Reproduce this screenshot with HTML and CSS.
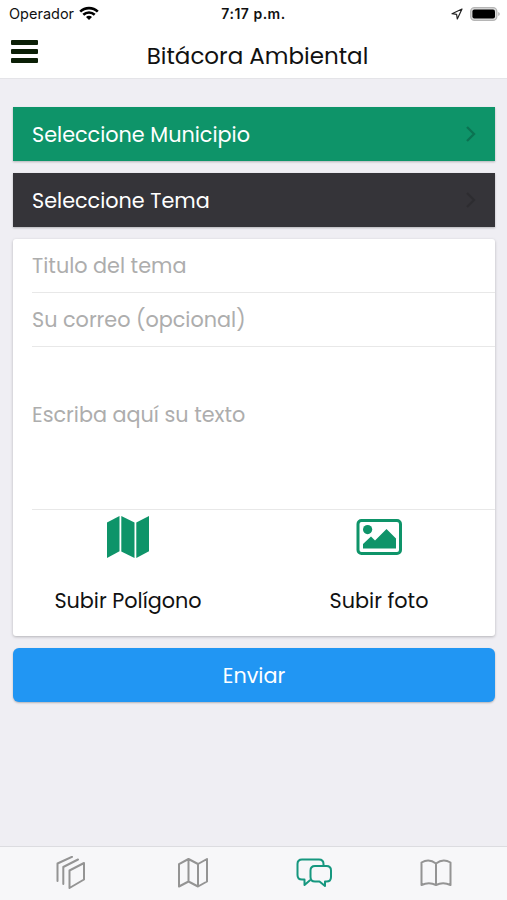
FILE: index.html
```
<!DOCTYPE html>
<html lang="es">
<head>
  <meta charset="UTF-8">
  <title>Bitácora Ambiental</title>
  <meta name="viewport" content="width=device-width, initial-scale=1.0">
  <link rel="stylesheet" href="styles.css">
</head>
<body>
  <div class="status-bar">
    <div class="carrier">
      <span>Operador</span>
      <svg width="20" height="15" viewBox="0 0 20 15" fill="none" stroke="#000" stroke-width="2.6">
        <path d="M1.2 5.6C6 .9 14 .9 18.800 5.600"/>
        <path d="M4.300 8.800c3.200-3 8.200-3 11.400 0"/>
        <path d="M7 10.900c1.700-1.400 4.300-1.400 6 0l-3 3.100z" fill="#000" stroke="none"/>
      </svg>
    </div>
    <span class="clock">7:17 p.m.</span>
    <div class="indicators">
      <svg width="12" height="12" viewBox="0 0 12 12" fill="none" stroke="#222" stroke-width="1.200" stroke-linejoin="round">
        <path d="M11 1 1 5.700l4.600.6.7 4.700z"/>
      </svg>
      <svg width="30" height="14" viewBox="0 0 30 14">
        <rect x=".7" y=".7" width="26.100" height="12.600" rx="3.800" fill="#ddd" stroke="#b5b5b5" stroke-width="1.300"/>
        <rect x="2.400" y="2.400" width="22.600" height="9.200" rx="2" fill="#000"/>
        <path d="M28.200 5v4q1.600-.7 1.600-2t-1.600-2" fill="#b5b5b5"/>
      </svg>
    </div>
  </div>

  <header class="header">
    <button class="menu-toggle" aria-label="Menú"><i></i><i></i><i></i></button>
    <h1 class="title">Bitácora Ambiental</h1>
  </header>

  <main class="content">
    <div class="select municipio">
      <span>Seleccione Municipio</span>
      <svg class="arrow" width="10" height="16" viewBox="0 0 10 16"><path d="M1 1l7 7-7 7"/></svg>
    </div>
    <div class="select tema">
      <span>Seleccione Tema</span>
      <svg class="arrow" width="10" height="16" viewBox="0 0 10 16"><path d="M1 1l7 7-7 7"/></svg>
    </div>

    <div class="card">
      <div class="field"><span>Titulo del tema</span></div>
      <div class="field"><span>Su correo (opcional)</span></div>
      <div class="field field-area"><span>Escriba aquí su texto</span></div>
      <div class="uploads">
        <div class="upload">
          <svg width="42" height="42" viewBox="0 0 42 42" fill="#0e9469">
            <path d="M0 6.500 12.500 0v35.200L0 42z"/>
            <path d="M14.300 0 27.500 6.600V42l-13.200-6.600z"/>
            <path d="M29.300 6.600 42 0v35.200L29.300 42z"/>
          </svg>
          <span>Subir Polígono</span>
        </div>
        <div class="upload">
          <svg width="46" height="42" viewBox="0 0 46 42" fill="#0e9469">
            <rect x="2" y="4.500" width="42.500" height="33" rx="3.500" fill="none" stroke="#0e9469" stroke-width="3"/>
            <circle cx="11.600" cy="13.600" r="4.600"/>
            <path d="M7 32.500V28l8-7.500 4 4L30.500 13 40 22.500v10z"/>
          </svg>
          <span>Subir foto</span>
        </div>
      </div>
    </div>

    <button class="send">Enviar</button>
  </main>

  <nav class="tabs">
    <div class="tab">
      <svg width="30" height="34" viewBox="0 0 30 34">
        <path d="M13.500 14.500 28 7v16.500L13.500 32z"/>
        <path d="M7.300 28V11L22 3.500M1.500 25V7.500L16 0.800"/>
      </svg>
    </div>
    <div class="tab">
      <svg width="30" height="30" viewBox="0 0 30 30">
        <path d="M1 6.200 10.500 1l9.500 5 9-5v22.500l-9 5-9.500-5L1 28.500zM10.500 1v22.500M20 6v22.500"/>
      </svg>
    </div>
    <div class="tab active">
      <svg width="36" height="30" viewBox="0 0 36 30">
        <path d="M27.500 8V6q0-4.500-4.500-4.500H6Q1.500 1.500 1.500 6v11q0 4.500 4.500 4.500h2.500V27l5.500-4.700"/>
        <path d="M19 8h11.500q4.500 0 4.500 4.500V19q0 4.500-4.500 4.500H29V28l-5.500-4.500H19q-4.500 0-4.500-4.500v-6.500Q14.500 8 19 8z"/>
      </svg>
    </div>
    <div class="tab">
      <svg width="32" height="28" viewBox="0 0 32 28">
        <path d="M16 4.500Q9-1 1.500 3.500V26q7.500-3.500 14.500 0 7-3.500 14.500 0V3.500Q23-1 16 4.500zV26"/>
      </svg>
    </div>
  </nav>
</body>
</html>
```
FILE: styles.css
```
* {
  box-sizing: border-box;
}
body {
  margin: 0;
  height: 100vh;
  display: flex;
  flex-direction: column;
  overflow: hidden;
  background-color: #efeef3;
  color: #111;
  font-family: Poppins, Inter, "Liberation Sans", sans-serif;
  font-size: 20.75px;
}
button {
  border: none;
  padding: 0;
  font: inherit;
}
span, h1 {
  white-space: nowrap;
}
.status-bar {
  display: grid;
  grid-template-columns: 1fr auto 1fr;
  align-items: center;
  height: 27px;
  padding: 0 7px 0 9px;
  background-color: #fff;
  font-family: Inter, "Liberation Sans", sans-serif;
  font-size: 14px;
}
.carrier, .indicators {
  display: flex;
  align-items: center;
  gap: 5px;
}
.carrier {
  font-size: 14.5px;
}
.indicators {
  justify-content: flex-end;
  gap: 7px;
}
.clock {
  font-weight: 600;
  letter-spacing: 0.5px;
  margin-right: 2px;
}
.header {
  position: relative;
  display: flex;
  justify-content: center;
  align-items: center;
  height: 52px;
  padding: 9px 0 3px 8px;
  background-color: #fff;
  border-bottom: 1px solid #e4e4e8;
}
.menu-toggle {
  position: absolute;
  left: 11px;
  top: 13px;
  display: flex;
  flex-direction: column;
  gap: 4px;
  background: none;
}
.menu-toggle i {
  width: 27px;
  height: 5px;
  border-radius: 1px;
  background-color: #0b1f06;
}
.title {
  margin: 0;
  font-size: 23px;
  font-weight: 400;
}
.content {
  flex: 1;
  display: flex;
  flex-direction: column;
  gap: 12px;
  padding: 28px 12px 0 13px;
}
.select {
  display: flex;
  align-items: center;
  justify-content: space-between;
  height: 54px;
  padding: 0 19px;
  color: #fff;
  box-shadow: 0 1px 2px rgba(0, 0, 0, 0.25);
}
.municipio {
  background-color: #0e9469;
}
.tema {
  background-color: #353439;
}
.arrow {
  fill: none;
  stroke: rgba(0, 0, 0, 0.22);
  stroke-width: 2.4;
}
.tema .arrow {
  stroke: rgba(0, 0, 0, 0.14);
}
.card {
  height: 397px;
  padding-left: 19px;
  background-color: #fff;
  border-radius: 3px;
  box-shadow: 0 1px 3px rgba(0, 0, 0, 0.25);
}
.field {
  display: flex;
  align-items: center;
  height: 54px;
  border-bottom: 1px solid #e8e8e8;
  color: #adadad;
}
.field-area {
  height: 163px;
  padding-bottom: 28px;
}
.uploads {
  display: grid;
  grid-template-columns: 192px 1fr;
  column-gap: 39px;
  padding-top: 6px;
}
.upload {
  display: flex;
  flex-direction: column;
  align-items: center;
  gap: 27px;
}
.send {
  height: 54px;
  background-color: #2196f3;
  border-radius: 6px;
  color: #fff;
  box-shadow: 0 1px 2px rgba(0, 0, 0, 0.25);
}
.tabs {
  display: grid;
  grid-template-columns: repeat(4, 1fr);
  height: 54px;
  padding: 0 10px;
  background-color: #f7f7f9;
  border-top: 1px solid #dcdce0;
}
.tab {
  display: flex;
  align-items: center;
  justify-content: center;
  padding-bottom: 2px;
}
.tab svg {
  fill: none;
  stroke: #949494;
  stroke-width: 2;
  stroke-linejoin: round;
  stroke-linecap: round;
}
.active svg {
  stroke: #16977f;
}
```
